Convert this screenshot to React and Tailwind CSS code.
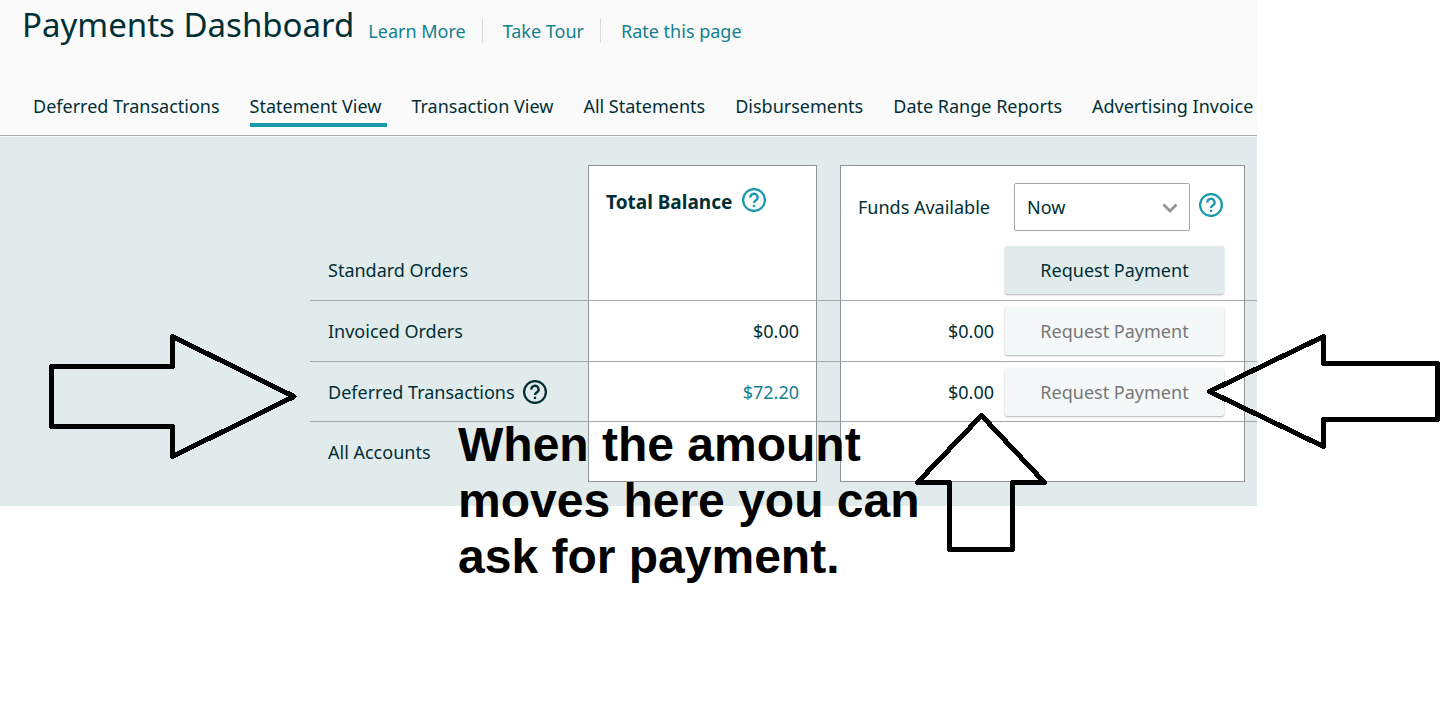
import { useState } from 'react';

const links = ['Learn More', 'Take Tour', 'Rate this page'];

const tabs = [
  'Deferred Transactions',
  'Statement View',
  'Transaction View',
  'All Statements',
  'Disbursements',
  'Date Range Reports',
  'Advertising Invoice',
];

function HelpButton({ label, className = '' }) {
  return (
    <button type="button" aria-label={label} className={`flex shrink-0 ${className}`}>
      <svg viewBox="0 0 24 24" className="size-6" fill="none" stroke="currentColor" strokeWidth="2.3">
        <circle cx="12" cy="12" r="10.9" />
        <path d="M8.4 9.700a3.600 3.500 0 1 1 5.500 2.600c-1.200.8-1.900 1.300-1.900 2.700" />
        <path d="M12 16.700v2.300" />
      </svg>
    </button>
  );
}

function RequestButton({ disabled }) {
  return (
    <button
      type="button"
      disabled={disabled}
      className="h-12 w-[219px] rounded-xs bg-[#e2ebec] shadow-[0_1px_2px_rgba(0,0,0,0.3)] disabled:bg-[#f5f8f9] disabled:text-[#777777]"
    >
      Request Payment
    </button>
  );
}

// One line of the balance table, the gap cells keep the divider running between the cards
function BalanceRow({ label, help, total, funds, action, height, last }) {
  const line = last ? '' : 'border-b border-[#a3a8a9]';
  const card = last ? 'border-b border-b-[#8f9596]' : 'border-b border-b-[#a3a8a9]';

  return (
    <tr className={height}>
      <th scope="row" className={`pl-[18px] text-left font-normal ${line}`}>
        <div className="flex items-center gap-2">
          {label}
          {help && <HelpButton label="About deferred transactions" />}
        </div>
      </th>
      <td className={`border-x border-x-[#8f9596] bg-white pr-[17px] text-right ${card}`}>{total}</td>
      <td className={line}></td>
      <td className={`border-x border-x-[#8f9596] bg-white pr-5 ${card}`}>
        <div className="flex items-center justify-end gap-[11px]">
          {funds}
          {action}
        </div>
      </td>
      <td className={line}></td>
    </tr>
  );
}

export default function App() {
  const [active, setActive] = useState('Statement View');
  const [range, setRange] = useState('Now');

  return (
    <div className="relative min-h-screen overflow-hidden bg-white font-['Noto_Sans',sans-serif] text-[18px] leading-6 text-[#002f36]">
      <main className="mr-[188px] overflow-hidden bg-[#e2ebec]">
        <header className="border-b border-[#a9afb0] bg-[#fafafa]">
          <div className="flex items-center pl-[22px]">
            <h1 className="text-[33px] leading-[50px]">Payments Dashboard</h1>
            <div className="mt-3 flex divide-x divide-[#d5d9d9]">
              {links.map((link) => (
                <a key={link} href="#" className="pr-4 pl-5 text-[#12808f] first:pl-[14px]">{link}</a>
              ))}
            </div>
          </div>
          <nav className="mt-11 flex h-[41px] gap-[30px] whitespace-nowrap pl-[33px]">
            {tabs.map((tab) => (
              <a
                key={tab}
                href="#"
                onClick={() => setActive(tab)}
                className={`h-[33px] ${tab === active ? '-mr-[6px] border-b-4 border-[#179bab] pr-[6px]' : ''}`}
              >
                {tab}
              </a>
            ))}
          </nav>
        </header>

        <section className="border-t border-[#f3f7f7] pt-7 pb-6 pl-[310px]">
          <table className="w-full table-fixed border-separate border-spacing-0">
            <colgroup>
              <col />
              <col className="w-[229px]" />
              <col className="w-[23px]" />
              <col className="w-[405px]" />
              <col className="w-3" />
            </colgroup>
            <thead>
              <tr className="h-[75px]">
                <td></td>
                <th scope="col" className="border-x border-t border-[#8f9596] bg-white pl-[17px] align-top">
                  <div className="flex items-center gap-[10px] pt-[22px] text-[19px] font-bold">
                    Total Balance
                    <HelpButton label="About total balance" className="mb-1 text-[#179bab]" />
                  </div>
                </th>
                <td></td>
                <th scope="col" className="border-x border-t border-[#8f9596] bg-white pr-[21px] pl-[17px] align-top font-normal">
                  <div className="flex items-center gap-[9px] pt-[17px]">
                    <label htmlFor="funds-range" className="mr-auto">Funds Available</label>
                    <div className="relative">
                      <select
                        id="funds-range"
                        value={range}
                        onChange={(e) => setRange(e.target.value)}
                        className="h-12 w-44 appearance-none rounded-xs border border-[#a3a8a9] bg-white pl-3"
                      >
                        <option>Now</option>
                      </select>
                      <svg viewBox="0 0 16 10" className="pointer-events-none absolute top-5 right-3 h-[10px] w-4" fill="none" stroke="#8f9596" strokeWidth="2.800">
                        <path d="M1.500 1.500 8 8l6.500-6.500" />
                      </svg>
                    </div>
                    <HelpButton label="About funds available" className="mb-1 text-[#179bab]" />
                  </div>
                </th>
                <td></td>
              </tr>
            </thead>
            <tbody>
              <BalanceRow label="Standard Orders" action={<RequestButton />} height="h-[61px]" />
              <BalanceRow label="Invoiced Orders" total="$0.00" funds="$0.00" action={<RequestButton disabled />} height="h-[61px]" />
              <BalanceRow
                label="Deferred Transactions"
                help
                total={<a href="#" className="text-[#12808f]">$72.20</a>}
                funds="$0.00"
                action={<RequestButton disabled />}
                height="h-[60px]"
              />
              <BalanceRow label="All Accounts" height="h-[60px]" last />
            </tbody>
          </table>
        </section>
      </main>

      {/* Notes drawn over the page */}
      <svg viewBox="48 332 252 130" className="pointer-events-none absolute top-[332px] left-12 h-[130px] w-[252px]" fill="none" stroke="#000" strokeWidth="5" strokeLinejoin="round" shapeRendering="crispEdges">
        <path d="M51.500 366.500H172.500V336.500L294 396.500 172.500 456.500V426.500H51.500Z" />
      </svg>
      <svg viewBox="1205 332 240 120" className="pointer-events-none absolute top-[332px] left-[1205px] h-[120px] w-[240px]" fill="none" stroke="#000" strokeWidth="5" strokeLinejoin="round" shapeRendering="crispEdges">
        <path d="M1209.500 391.500 1323.500 336.500V363.500H1437.500V419.500H1323.500V446.500Z" />
      </svg>
      <svg viewBox="912 410 138 144" className="pointer-events-none absolute top-[410px] left-[912px] h-[144px] w-[138px]" fill="none" stroke="#000" strokeWidth="5" strokeLinejoin="round" shapeRendering="crispEdges">
        <path d="M981.500 415.500 1044.500 482.500H1012.500V549.500H949.500V482.500H917.500Z" />
      </svg>
      <p className="pointer-events-none absolute top-[417px] left-[458px] w-[480px] font-['Liberation_Sans',sans-serif] text-[48px] leading-[56px] font-bold text-black">
        When the amount moves here you can ask for payment.
      </p>
    </div>
  );
}
